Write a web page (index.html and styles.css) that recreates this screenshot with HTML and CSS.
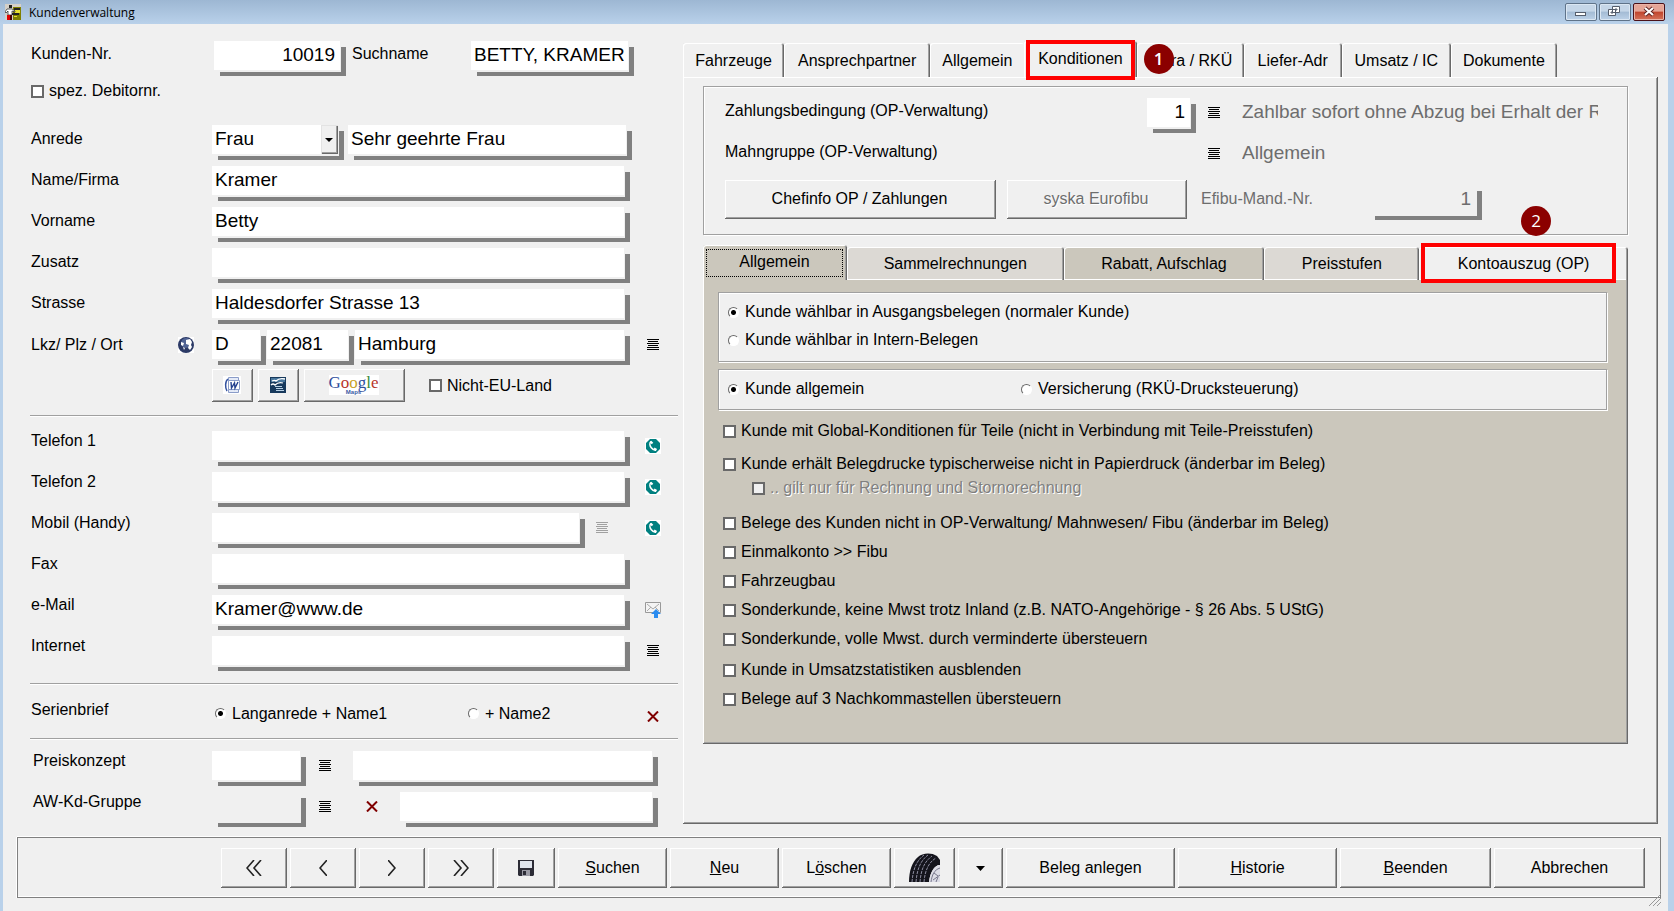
FILE: index.html
```html
<!DOCTYPE html>
<html lang="de">
<head>
<meta charset="utf-8">
<title>Kundenverwaltung</title>
<link rel="stylesheet" href="styles.css">
</head>
<body>
<svg class="defs" aria-hidden="true">
  <symbol id="i-list" viewBox="0 0 12 11"><path d="M0 .5h12M1 2.5h10M0 4.5h12M1 6.5h10M0 8.5h12M0 10.5h12" stroke="currentColor"/></symbol>
  <symbol id="i-phone" viewBox="0 0 16 16"><path fill="#fff" d="M0 0h16v16H0z"/><path fill="#008080" d="M5 1h6l4 4v6l-4 4H5l-4-4V5z"/><path d="M6 3.5c-1.600 1.500-1.300 4.300.3 6.300 1.300 1.600 3 2.700 4.700 2.400" stroke="#fff" stroke-width="1.600" fill="none"/><path d="M5.500 3.500l2 2M9 10.500l2.500 1.500" stroke="#fff" stroke-width="2.200"/></symbol>
  <symbol id="i-x" viewBox="0 0 12 11"><path d="M1 .5l10 10M11 .5l-10 10" stroke="#800000" stroke-width="2"/></symbol>
</svg>
<div class="window">
  <header class="titlebar">
    <svg class="app-icon" viewBox="0 0 16 16"><path fill="#d5d0c8" d="M0 0h16v16H0z"/><path fill="#808000" d="M8 3h8v13H8z"/><path fill="#222" d="M4 1h3v3H4zM9 4h6v2H9zM7 9h7v2H7z"/><path fill="#e8e030" d="M10 6h5v3h-5zM9 12h3v1H9z"/><path fill="#fff" stroke="#222" stroke-width=".7" d="M2 5h5l3 2v1L7 7v4H3V7L1 9 0 8z"/><path fill="#e00000" d="M2 11h3v5H2z"/><path fill="#400" d="M5 11h2v5H5z"/></svg>
    <h1 class="title">Kundenverwaltung</h1>
    <div class="win-buttons">
      <button class="win-btn" aria-label="Minimieren"><svg viewBox="0 0 30 16" width="30" height="16"><rect x="9.500" y="8.500" width="10" height="3" fill="#fff" stroke="#555d6b"/></svg></button>
      <button class="win-btn" aria-label="Wiederherstellen"><svg viewBox="0 0 30 16" width="30" height="16"><path fill="#fff" stroke="#555d6b" d="M12.500 2.500h7v6h-7zM15 5h2v1h-2zM8.500 5.500h7v6h-7zM11 8h2v1h-2z"/></svg></button>
      <button class="win-btn win-close" aria-label="Schließen"><svg viewBox="0 0 30 16" width="30" height="16"><path d="M11 4l8 7M19 4l-8 7" stroke="#5a2020" stroke-width="4"/><path d="M11 4l8 7M19 4l-8 7" stroke="#fff" stroke-width="2.200"/></svg></button>
    </div>
  </header>

  <main class="workspace">
    <form class="customer">
      <div class="row row-first">
        <label class="label" for="nr">Kunden-Nr.</label>
        <input class="field w-nr num" id="nr" value="10019">
        <label class="label-inline" for="such">Suchname</label>
        <input class="field w-such" id="such" value="BETTY, KRAMER">
      </div>
      <label class="check spez"><input type="checkbox"> spez. Debitornr.</label>

      <section class="rows">
        <div class="row"><label class="label" for="anrede">Anrede</label>
          <span class="combo"><select class="field" id="anrede"><option>Frau</option></select><span class="combo-btn"></span></span>
          <input class="field grow-anrede" aria-label="Briefanrede" value="Sehr geehrte Frau"></div>
        <div class="row"><label class="label" for="name">Name/Firma</label><input class="field w-full" id="name" value="Kramer"></div>
        <div class="row"><label class="label" for="vor">Vorname</label><input class="field w-full" id="vor" value="Betty"></div>
        <div class="row"><label class="label" for="zus">Zusatz</label><input class="field w-full" id="zus"></div>
        <div class="row"><label class="label" for="str">Strasse</label><input class="field w-full" id="str" value="Haldesdorfer Strasse 13"></div>
        <div class="row"><label class="label label-globe" for="lkz">Lkz/ Plz / Ort
          <svg class="i16" viewBox="0 0 16 16"><path fill="#fff" d="M0 0h16v16H0z"/><circle cx="8" cy="8" r="8" fill="#2c3a66"/><circle cx="8" cy="6" r="5" fill="#6075a8" opacity=".7"/><path fill="#fff" d="M8 3l4-1 2 3-1 3 1 2-2 3-2-2 1-3-3-1zM3 5l3 1-1 3-2-1zM5 10l2 1-1 2z"/></svg></label>
          <input class="field w-lkz" id="lkz" value="D"><input class="field w-plz" aria-label="Plz" value="22081"><input class="field w-ort" aria-label="Ort" value="Hamburg">
          <button type="button" class="icon-btn at-end" aria-label="Ort wählen"><svg class="i-list"><use href="#i-list"/></svg></button></div>
      </section>
      <div class="tools">
        <button type="button" class="btn btn-tool" aria-label="Word"><svg width="18" height="18" viewBox="0 0 18 18"><path fill="#fff" d="M0 0h18v18H0z"/><path fill="#e4eaf7" stroke="#8a9cc8" d="M5.500 1.500h10v15h-10z"/><path fill="none" stroke="#3553a0" stroke-width="1.500" d="M5 3C2 5 2 12 4 15"/><path fill="#fff" stroke="#8a9cc8" d="M5.500 4.500h11v9h-11z"/><path fill="none" stroke="#24418e" stroke-width="1.400" d="M8 6l.5 6 3-5 .5 5L15 6"/></svg></button>
        <button type="button" class="btn btn-tool" aria-label="OpenOffice"><svg width="16" height="16" viewBox="0 0 16 16"><path fill="#17395c" d="M0 0h16v16H0z"/><path fill="#47759b" d="M1 1h14v4H1z"/><path d="M2 4c2-1 3-1 4 0 2-2 5-3 9-2M1 8c2-2 3-1 4 0 2-2 5-3 8-2" stroke="#fff" fill="none" stroke-width="1.300"/><path d="M5 9.500h7M6 11.500h7M6 13.500h8" stroke="#b8d0e4"/></svg></button>
        <button type="button" class="btn btn-google" aria-label="Google Maps"><span class="google"><span class="g-word"><i class="g1">G</i><i class="g2">o</i><i class="g3">o</i><i class="g1">g</i><i class="g4">l</i><i class="g2">e</i></span><span class="g-maps">Maps</span></span></button>
        <label class="check nonEu"><input type="checkbox"> Nicht-EU-Land</label>
      </div>

      <hr class="sep">
      <section class="rows contact">
        <div class="row"><label class="label" for="t1">Telefon 1</label><input class="field w-full" id="t1"><button type="button" class="icon-btn at-end" aria-label="Anrufen"><svg class="i16"><use href="#i-phone"/></svg></button></div>
        <div class="row"><label class="label" for="t2">Telefon 2</label><input class="field w-full" id="t2"><button type="button" class="icon-btn at-end" aria-label="Anrufen"><svg class="i16"><use href="#i-phone"/></svg></button></div>
        <div class="row"><label class="label" for="mob">Mobil (Handy)</label><input class="field w-mob" id="mob"><button type="button" class="icon-btn dim" aria-label="Liste" disabled><svg class="i-list"><use href="#i-list"/></svg></button><button type="button" class="icon-btn at-end" aria-label="Anrufen"><svg class="i16"><use href="#i-phone"/></svg></button></div>
        <div class="row"><label class="label" for="fax">Fax</label><input class="field w-full" id="fax"></div>
        <div class="row"><label class="label" for="mail">e-Mail</label><input class="field w-full" id="mail" value="Kramer@www.de"><button type="button" class="icon-btn at-end" aria-label="E-Mail senden"><svg class="i16" viewBox="0 0 16 16"><path fill="#f4f4f4" stroke="#999" d="M.5.500h15v10H.5z"/><path fill="none" stroke="#aaa" d="M2 2l6 5 6-5M2 9l4-4M14 9l-4-4"/><path fill="#2a8cf0" d="M11 7l5 5h-3v4H9v-4H6z"/></svg></button></div>
        <div class="row"><label class="label" for="www">Internet</label><input class="field w-full" id="www"><button type="button" class="icon-btn at-end" aria-label="Internet"><svg class="i-list"><use href="#i-list"/></svg></button></div>
      </section>

      <hr class="sep">
      <div class="row serial">
        <span class="label">Serienbrief</span>
        <label class="check radio-a"><input type="radio" name="serie" checked> Langanrede + Name1</label>
        <label class="check"><input type="radio" name="serie"> + Name2</label>
        <button type="button" class="icon-btn at-end" aria-label="Löschen"><svg class="i-list"><use href="#i-x"/></svg></button>
      </div>
      <hr class="sep">
      <section class="rows contact price">
        <div class="row"><label class="label" for="pk">Preiskonzept</label><input class="field w-code" id="pk"><button type="button" class="icon-btn" aria-label="Liste"><svg class="i-list"><use href="#i-list"/></svg></button><input class="field grow" aria-label="Preiskonzept Text"></div>
        <div class="row"><label class="label" for="aw">AW-Kd-Gruppe</label><input class="field flat w-code" id="aw"><button type="button" class="icon-btn" aria-label="Liste"><svg class="i-list"><use href="#i-list"/></svg></button><button type="button" class="icon-btn" aria-label="Entfernen"><svg class="i-list"><use href="#i-x"/></svg></button><input class="field grow" aria-label="AW-Kd-Gruppe Text"></div>
      </section>
    </form>

    <section class="details">
      <nav class="tabs">
        <button class="tab t1">Fahrzeuge</button><button class="tab t2">Ansprechpartner</button><button class="tab t3">Allgemein</button><button class="tab t4 active">Konditionen<span class="mark"></span></button><button class="tab t5">Extra / RKÜ<span class="badge badge-1">1</span></button><button class="tab t6">Liefer-Adr</button><button class="tab t7">Umsatz / IC</button><button class="tab t8">Dokumente</button>
      </nav>
      <div class="tab-body">
        <div class="payment">
          <div class="pay-row">
            <label class="pay-label" for="zb">Zahlungsbedingung (OP-Verwaltung)</label>
            <input class="field num w-zb" id="zb" value="1">
            <button class="icon-btn" aria-label="Liste"><svg class="i-list"><use href="#i-list"/></svg></button>
            <span class="pay-text">Zahlbar sofort ohne Abzug bei Erhalt der Rechnung</span>
          </div>
          <div class="pay-row">
            <span class="pay-label pay-label-wide">Mahngruppe (OP-Verwaltung)</span>
            <button class="icon-btn" aria-label="Liste"><svg class="i-list"><use href="#i-list"/></svg></button>
            <span class="pay-text">Allgemein</span>
          </div>
          <div class="pay-actions">
            <button class="btn btn-chef">Chefinfo OP / Zahlungen</button>
            <button class="btn btn-syska" disabled>syska Eurofibu</button>
            <label class="efibu" for="efibu">Efibu-Mand.-Nr.</label>
            <input class="field flat num w-efibu" id="efibu" value="1" disabled>
          </div>
        </div>

        <nav class="subtabs">
          <button class="subtab s1 active"><span class="focus">Allgemein</span></button><button class="subtab s2">Sammelrechnungen</button><button class="subtab s3">Rabatt, Aufschlag</button><button class="subtab s4">Preisstufen</button><button class="subtab s5">Kontoauszug (OP)<span class="mark"></span><span class="badge badge-2">2</span></button>
        </nav>
        <div class="sub-body">
          <div class="group group-a">
            <label class="check"><input type="radio" name="beleg" checked> Kunde wählbar in Ausgangsbelegen (normaler Kunde)</label>
            <label class="check"><input type="radio" name="beleg"> Kunde wählbar in Intern-Belegen</label>
          </div>
          <div class="group group-b">
            <label class="check"><input type="radio" name="art" checked> Kunde allgemein</label>
            <label class="check"><input type="radio" name="art"> Versicherung (RKÜ-Drucksteuerung)</label>
          </div>
          <div class="options options-a">
            <label class="check"><input type="checkbox"> Kunde mit Global-Konditionen für Teile (nicht in Verbindung mit Teile-Preisstufen)</label>
            <div class="nested">
              <label class="check"><input type="checkbox"> Kunde erhält Belegdrucke typischerweise nicht in Papierdruck (änderbar im Beleg)</label>
              <label class="check off"><input type="checkbox" disabled> .. gilt nur für Rechnung und Stornorechnung</label>
            </div>
          </div>
          <div class="options">
            <label class="check"><input type="checkbox"> Belege des Kunden nicht in OP-Verwaltung/ Mahnwesen/ Fibu (änderbar im Beleg)</label>
            <label class="check"><input type="checkbox"> Einmalkonto &gt;&gt; Fibu</label>
            <label class="check"><input type="checkbox"> Fahrzeugbau</label>
            <label class="check"><input type="checkbox"> Sonderkunde, keine Mwst trotz Inland (z.B. NATO-Angehörige - § 26 Abs. 5 UStG)</label>
            <label class="check"><input type="checkbox"> Sonderkunde, volle Mwst. durch verminderte übersteuern</label>
          </div>
          <div class="options">
            <label class="check"><input type="checkbox"> Kunde in Umsatzstatistiken ausblenden</label>
            <label class="check"><input type="checkbox"> Belege auf 3 Nachkommastellen übersteuern</label>
          </div>
        </div>
      </div>
    </section>
  </main>

  <footer class="actions">
    <button class="btn b-nav" aria-label="Erster"><svg width="16" height="16" viewBox="0 0 16 16"><path class="chev" d="M8 0L1 8l7 8M15 0L8 8l7 8"/></svg></button>
    <button class="btn b-nav" aria-label="Zurück"><svg width="8" height="16" viewBox="0 0 8 16"><path class="chev" d="M8 0L1 8l7 8"/></svg></button>
    <button class="btn b-nav" aria-label="Weiter"><svg width="8" height="16" viewBox="0 0 8 16"><path class="chev" d="M0 0l7 8-7 8"/></svg></button>
    <button class="btn b-nav" aria-label="Letzter"><svg width="16" height="16" viewBox="0 0 16 16"><path class="chev" d="M1 0l7 8-7 8M8 0l7 8-7 8"/></svg></button>
    <button class="btn b-save" aria-label="Speichern"><svg width="16" height="16" viewBox="0 0 16 16"><path fill="#2c2c36" d="M0 0h16v15l-1 1H1l-1-1z"/><path fill="#dfe4ec" d="M2 1h12v7H2z"/><path fill="#9a9aa4" d="M4 10h8v6H4z"/><path fill="#2c2c36" d="M5 11h3v4H5z"/></svg></button>
    <button class="btn b-text"><span><u>S</u>uchen</span></button>
    <button class="btn b-text"><span><u>N</u>eu</span></button>
    <button class="btn b-text"><span>L<u>ö</u>schen</span></button>
    <button class="btn b-tire" aria-label="Reifen"><svg width="32" height="30" viewBox="0 0 32 30"><path fill="#14141c" d="M0 29C0 18 3 9 9 4 13 0 22-1 28 3l3 4v5c-6 0-10 8-11 17z"/><path d="M3 29C4 17 7 8 15 2M7 29C8 17 11 8 19 2M11 29c1-12 4-20 12-26M15 29c1-12 5-20 12-24" stroke="#8d8da0" fill="none" stroke-dasharray="3 1"/><path fill="#dcdce6" d="M20 29c1-9 5-17 11-17v17z"/><path d="M22 29c1-7 3-12 9-14M24 27l7-5M25 20l4 3M27 29l2-5" stroke="#77778c" fill="none"/></svg></button>
    <button class="btn b-drop" aria-label="Auswahl"><svg width="9" height="5" viewBox="0 0 9 5"><path d="M0 0h9L4.500 5z"/></svg></button>
    <button class="btn b-beleg">Beleg anlegen</button>
    <button class="btn b-hist"><span><u>H</u>istorie</span></button>
    <button class="btn b-end"><span><u>B</u>eenden</span></button>
    <button class="btn b-end">Abbrechen</button>
    <svg class="grip" width="12" height="12" viewBox="0 0 12 12"><path d="M0 12L12 0M4 12l8-8M8 12l4-4" stroke="#999"/></svg>
  </footer>
</div>
</body>
</html>
```
FILE: styles.css
```css
:root {
  --face: #f0f0f0;
  --shade: #808080;
  --beige: #cbc7bc;
  --frame: #b9d1ea;
}

* { box-sizing: border-box; }

body {
  margin: 0;
  font: 16px/20px "Liberation Sans", Arial, sans-serif;
  color: #000;
  background: var(--face);
}

button, input, select { font: inherit; color: inherit; margin: 0; border-radius: 0; }
.defs { position: absolute; width: 0; height: 0; }

.window {
  min-height: 100vh;
  display: flex;
  flex-direction: column;
  border-left: 3px solid var(--frame);
  border-right: 6px solid var(--frame);
}

/* Title bar */
.titlebar {
  display: flex;
  align-items: center;
  gap: 8px;
  height: 24px;
  margin: 0 -6px 0 -3px;
  padding: 0 9px 0 5px;
  background: linear-gradient(#9db7d3, #b9d1ea);
}
.app-icon { width: 16px; height: 16px; }
.title { margin: 0; padding-top: 2px; flex: 1; font: 12px/16px "Open Sans", "Noto Sans", sans-serif; }
.win-buttons { display: flex; gap: 2px; }
.win-btn {
  width: 32px;
  height: 18px;
  padding: 0;
  border: 1px solid #5f7389;
  border-radius: 2px;
  background: linear-gradient(#c5d6e8 45%, #a3bbd4 50%, #bdd2e8);
  box-shadow: inset 0 0 0 1px #dbe7f3;
}
.win-btn svg { display: block; }
.win-close {
  border-color: #4a1119;
  background: linear-gradient(#e5a597 45%, #c0442c 50%, #d4735c);
  box-shadow: inset 0 0 0 1px #e9b3a8;
}

/* Shared controls */
.field {
  height: 29px;
  padding: 0 4px 2px 3px;
  border: 0;
  outline: 0;
  background: #fff;
  font-size: 19px;
  line-height: 24px;
  box-shadow: 1px 2px var(--face), 6px 6px var(--shade);
  min-width: 0;
}
.field.flat { background: var(--face); }
.field.num { text-align: right; padding-right: 5px; }

.btn {
  display: flex;
  align-items: center;
  justify-content: center;
  padding: 0 2px 2px 0;
  border: 0;
  background: var(--face);
  box-shadow: inset -1px -1px #696969, inset 1px 1px #fff, inset -2px -2px #a0a0a0;
  white-space: nowrap;
}
.btn:disabled { color: #6d6d6d; text-shadow: 1px 1px #fff; }

.icon-btn {
  display: flex;
  align-items: center;
  justify-content: center;
  width: 16px;
  height: 16px;
  padding: 0;
  border: 0;
  background: none;
}
.i-list { width: 12px; height: 11px; }
.i16 { width: 16px; height: 16px; }
.dim { color: #a0a0a0; }

.check { display: flex; align-items: center; gap: 6px; white-space: nowrap; }
.check input { appearance: none; flex: none; background: #fff; }
.check input[type="checkbox"] { width: 13px; height: 13px; border: 2px solid #696969; }
.check input[type="checkbox"]:disabled { background: var(--face); }
.check input[type="radio"] {
  width: 11px;
  height: 11px;
  border-radius: 50%;
  border: 1px solid;
  border-color: #696969 #fff #fff #696969;
}
.check input[type="radio"]:checked { background: radial-gradient(#000 2px, #fff 3px); }
.check.off { color: #808080; text-shadow: 1px 1px #fff; }
.options .check, .spez, .nonEu { gap: 5px; }

/* Customer form */
.workspace { flex: 1; display: flex; gap: 5px; padding: 17px 10px 13px 27px; }
.customer { flex: none; width: 648px; }
.row { display: flex; align-items: center; height: 29px; }
.label { flex: none; width: 182px; padding-left: 1px; padding-bottom: 2px; }
.row-first .label { width: 184px; padding-bottom: 4px; }
.w-nr { width: 126px; }
.label-inline { width: 131px; padding-left: 12px; padding-bottom: 4px; }
.w-such { width: 157px; }
.spez { margin: 11px 0 24px 1px; }
.rows { display: grid; gap: 12px; }
.w-full { width: 412px; }
.combo { position: relative; width: 126px; margin-right: 10px; }
.combo .field { display: block; width: 100%; appearance: none; }
.combo-btn {
  position: absolute;
  top: 0;
  right: 0;
  width: 17px;
  height: 29px;
  background: var(--face);
  box-shadow: inset 1px 1px #e3e3e3, inset -1px -1px #696969, inset -2px -2px #a0a0a0;
  pointer-events: none;
}
.combo-btn::after {
  content: "";
  position: absolute;
  left: 4px;
  top: 13px;
  border: 4px solid transparent;
  border-top-color: #000;
  border-bottom: 0;
}
.grow-anrede { width: 278px; }
.label-globe { display: flex; justify-content: space-between; align-items: center; padding-right: 18px; padding-bottom: 0; }
.w-lkz { width: 48px; margin-right: 7px; }
.w-plz { width: 81px; margin-right: 7px; }
.w-ort { width: 269px; }
.at-end { margin-left: auto; margin-right: 17px; }
.tools { display: flex; align-items: center; gap: 5px; margin: 10px 0 13px 182px; }
.btn-tool { width: 41px; height: 33px; }
.btn-google { width: 101px; height: 33px; }
.nonEu { margin-left: 19px; }
.google { display: flex; flex-direction: column; align-items: center; width: 50px; height: 20px; background: #fff; font-family: "Liberation Serif", serif; }
.g-word { font-size: 17px; line-height: 15px; }
.g-word i { font-style: normal; }
.g-maps { font: bold 6px/4px "Liberation Sans", sans-serif; color: #3b5ba5; }
.g1 { color: #2f4f9d; }
.g2 { color: #b8352b; }
.g3 { color: #c9a227; }
.g4 { color: #3a8a3a; }
.sep { margin: 0; height: 2px; border: 0; border-top: 1px solid #a0a0a0; background: #fff; }
.contact { padding: 14px 0 18px; }
.contact .label { padding-bottom: 10px; }
.w-mob { width: 367px; margin-right: 15px; }
.serial { height: 53px; padding-top: 4px; }
.serial .label { padding-bottom: 8px; width: 185px; }
.serial .icon-btn { padding-top: 5px; }
.radio-a { width: 253px; }
.price { padding: 11px 0 0; }
.price .label { padding-left: 3px; }
.w-code { width: 88px; margin-right: 17px; }
.price .row { padding-right: 29px; }
.price .icon-btn + .field { margin-left: 20px; }
.price .icon-btn + .icon-btn { margin-left: 31px; }
.grow { flex: 1; }

/* Detail tabs */
.details { flex: 1; min-width: 0; display: flex; flex-direction: column; }
.tabs { display: flex; align-items: flex-end; padding-right: 101px; }
.tab, .subtab {
  position: relative;
  height: 34px;
  padding: 1px 0 0;
  border: 0;
  background: var(--face);
  box-shadow: inset 1px 1px #fff, inset -1px 0 #696969, inset -2px 0 #a0a0a0;
  white-space: nowrap;
  border-radius: 3px 3px 0 0;
}
.tab.active { height: 36px; padding: 0; }
.t1 { flex: 101; }
.t2 { flex: 146; }
.t3 { flex: 94; }
.tab.t3 { box-shadow: inset 1px 1px #fff; }
.t4 { flex: 112; }
.t5 { flex: 107; }
.t6 { flex: 98; }
.t7 { flex: 109; }
.t8 { flex: 106; }
.mark { position: absolute; inset: -1px 2px -3px 2px; border: 4px solid #f00; z-index: 1; }
.badge {
  position: absolute;
  z-index: 2;
  width: 30px;
  height: 30px;
  border-radius: 50%;
  background: #8b0000;
  color: #fff;
  font: 17px/30px "Open Sans", sans-serif;
  text-align: center;
}
.badge-1 { left: 7px; top: 1px; font-weight: 600; }
.badge-2 { right: 77px; top: -41px; }
.tab-body {
  flex: 1;
  padding: 9px 30px 79px 20px;
  box-shadow: inset -1px -1px #696969, inset 1px 1px #fff, inset -2px -2px #a0a0a0;
}

.payment {
  padding: 11px 29px 15px 21px;
  border: 1px solid #a0a0a0;
  box-shadow: inset 1px 1px #fff, 1px 1px #fff;
}
.pay-row { display: flex; align-items: center; height: 41px; padding-bottom: 12px; }
.pay-label { width: 422px; padding-bottom: 4px; }
.pay-label-wide { width: 465px; }
.w-zb { width: 43px; }
.pay-row .icon-btn { flex: none; margin: 0 20px 0 16px; }
.pay-text { flex: 1; overflow: hidden; white-space: nowrap; padding-bottom: 2px; font-size: 19px; line-height: 24px; color: #6d6d6d; }
.pay-actions { display: flex; align-items: center; }
.btn-chef { width: 271px; height: 39px; margin-right: 11px; }
.btn-syska { width: 180px; height: 39px; margin-right: 14px; }
.efibu { width: 168px; color: #6d6d6d; padding-bottom: 2px; }
.w-efibu { width: 107px; color: #6d6d6d; }

.subtabs { display: flex; align-items: flex-end; padding-top: 10px; }
.subtab { height: 33px; background: #dcd9d4; box-shadow: inset 1px 1px #fff, inset -1px 0 #696969, inset -2px 0 #a0a0a0, inset 0 -1px #fff; }
.subtab.active { height: 35px; padding: 0; background: var(--beige); box-shadow: inset 1px 1px #fff, inset -1px 0 #696969, inset -2px 0 #a0a0a0; }
.focus { display: block; margin: 0 4px 0 3px; height: 28px; line-height: 24px; border: 1px dotted #000; }
.s1 { flex: 144; }
.s2 { flex: 217; }
.s3 { flex: 201; }
.subtab.s3 { background: var(--beige); }
.s4 { flex: 155; }
.s5 { flex: 209; }
.subtab.s5 { background: var(--face); }
.s5 .mark { inset: -4px 12px -3px 2px; }
.sub-body {
  padding: 12px 21px 35px 15px;
  background: var(--beige);
  box-shadow: inset -1px -1px #696969, inset 1px 0 #fff, inset -2px -2px #a0a0a0;
}
.group { border: 1px solid #a0a0a0; background: var(--face); box-shadow: inset 1px 1px #fff, 1px 1px #fff; padding-left: 9px; }
.group-a { display: grid; gap: 8px; padding-top: 9px; padding-bottom: 11px; margin-bottom: 7px; }
.group-b { display: flex; padding-top: 9px; padding-bottom: 10px; }
.group-b .check:first-child { width: 293px; }
.options { display: grid; gap: 9px; padding-left: 5px; margin-top: 11px; }
.options-a { gap: 13px; margin-bottom: 15px; }
.nested { display: grid; gap: 4px; }
.off { padding-left: 29px; }

/* Footer */
.actions {
  position: relative;
  display: flex;
  gap: 3px;
  margin: 0 7px 13px 14px;
  padding: 10px 15px 9px 203px;
  border: 1px solid var(--shade);
  box-shadow: 0 -1px #fff, -1px 0 #fff, inset 0 -1px #fff;
}
.actions .btn { height: 40px; min-width: 0; padding: 0; }
.chev { fill: none; stroke: #222; stroke-width: 1.6; }
.b-nav { flex: 66; }
.b-save { flex: 58; }
.b-text { flex: 109; }
.b-tire { flex: 61; }
.b-drop { flex: 45; }
.b-beleg { flex: 169; }
.b-hist { flex: 159; }
.b-end { flex: 151; }
.grip { position: absolute; right: -1px; bottom: -9px; }
```
